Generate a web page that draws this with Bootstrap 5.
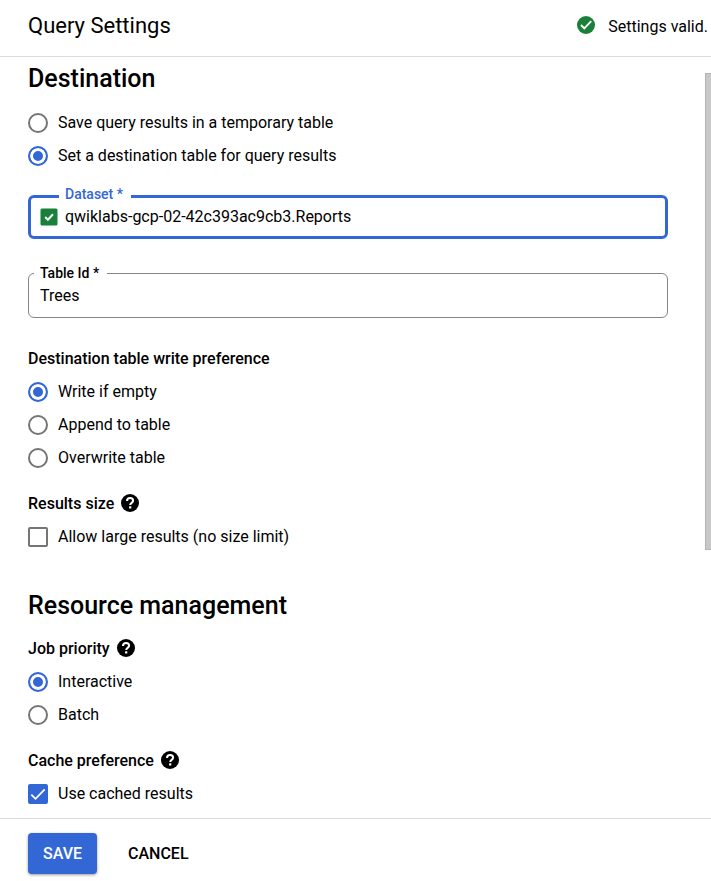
<!DOCTYPE html>
<html lang="en">
<head>
<meta charset="utf-8">
<meta name="viewport" content="width=device-width, initial-scale=1">
<title>Query Settings</title>
<link href="https://cdn.jsdelivr.net/npm/bootstrap@5.3.0/dist/css/bootstrap.min.css" rel="stylesheet">
<style>
  :root { --accent: #3367d6; --ok: #188038; --line: #dadce0; }
  body { font-family: Roboto, "Liberation Sans", sans-serif; font-size: 16px; line-height: 24px; color: #000; }
  .panel-head { padding: 11px 3px 15px 28px; border-bottom: 1px solid var(--line); min-height: 57px; }
  .panel-title { font-size: 22px; line-height: 30px; font-weight: 400; }
  .panel-body { padding: 6px 37px 8px 28px; }
  .panel-foot { padding: 14px 28px 7px; border-top: 1px solid var(--line); }
  .section-title { font-size: 25px; line-height: 32px; font-weight: 500; margin: 0 0 11px; }
  .section-title.later { margin-top: 37px; margin-bottom: 15px; }
  .group-title { font-size: 16px; line-height: 24px; font-weight: 500; margin: 0 0 4px; }
  .group-title.first { margin-top: 29px; }
  .group-gap { margin-top: 18px; }
  .option { min-height: 33px; gap: 10px; }
  .option .form-check-input { width: 20px; height: 20px; margin: 0; border: 2px solid #757575; flex: none; box-shadow: none; }
  .option .form-check-input[type=checkbox] { border-radius: 2px; }
  .option .form-check-input:checked { border-color: var(--accent); background-color: var(--accent); }
  .option .form-check-input[type=radio]:checked { background-image: none; box-shadow: inset 0 0 0 3px #fff; }
  .option .form-check-input[type=checkbox]:checked { background-origin: border-box; background-size: 20px 20px; background-image: url("data:image/svg+xml,%3Csvg xmlns='http://www.w3.org/2000/svg' viewBox='0 0 20 20'%3E%3Cpath d='M3.3 10.6l4.2 4.2L16.7 5.4' fill='none' stroke='white' stroke-width='1.8'/%3E%3C/svg%3E"); }
  .outlined { border: 1px solid #80868b; border-radius: 6px; height: 45px; padding: 0 11px; }
  .outlined.active { border: 3px solid var(--accent); height: 44px; padding: 0 9px; margin-top: 23px; margin-bottom: 34px; gap: 7px; }
  .outlined label { position: absolute; top: -11px; left: 5px; padding: 0 8px 0 6px; background: #fff; font-size: 14px; line-height: 20px; font-weight: 500; }
  .outlined.active label { top: -14px; left: 28px; color: var(--accent); }
  .outlined input { font-size: 16px; line-height: 24px; color: #000; outline: 0; min-width: 0; }
  .help { width: 20px; height: 20px; margin: 1px 0 0 6px; }
  .save { background: var(--accent); color: #fff; border-radius: 4px; box-shadow: 0 1px 3px rgba(0,0,0,.4); }
  .action { font-size: 16px; font-weight: 500; line-height: 25px; padding: 8px 15px; border: 0; }
  .rail { width: 6px; padding-top: 16px; }
  .thumb { height: 64%; background: #c8c8c8; border: 1px solid #b4b4b4; border-right: 0; }
</style>
<script src="https://cdn.jsdelivr.net/npm/bootstrap@5.3.0/dist/js/bootstrap.bundle.min.js" defer></script>
</head>
<body class="d-flex flex-column min-vh-100 bg-white">
<svg class="d-none" aria-hidden="true">
  <symbol id="help-icon" viewBox="0 0 20 20">
    <circle cx="10" cy="10" r="9" fill="#000"/>
    <path d="M7 8.1C7 6.1 8.3 5 10.1 5s3 1.100 3 2.700c0 2.100-2.900 2.200-2.900 4.200" fill="none" stroke="#fff" stroke-width="2"/>
    <rect x="9.100" y="13.300" width="2.200" height="2.200" fill="#fff"/>
  </symbol>
</svg>

<header class="panel-head d-flex align-items-start justify-content-between">
  <h1 class="panel-title m-0">Query Settings</h1>
  <div class="d-flex align-items-start pt-1" role="status">
    <svg class="me-2" width="20" height="20" viewBox="0 0 20 20" aria-hidden="true"><circle cx="10" cy="10" r="9" fill="#188038"/><path d="M5 10l3.300 3.300L15.200 6.200" fill="none" stroke="#fff" stroke-width="1.900"/></svg>
    <span class="ps-1">Settings valid.</span>
  </div>
</header>

<div class="d-flex flex-grow-1">
  <main class="panel-body flex-grow-1">
    <section>
      <h2 class="section-title" id="dest">Destination</h2>
      <div role="radiogroup" aria-labelledby="dest">
        <div class="option d-flex align-items-center"><input class="form-check-input" type="radio" name="dest" id="d1"><label for="d1">Save query results in a temporary table</label></div>
        <div class="option d-flex align-items-center"><input class="form-check-input" type="radio" name="dest" id="d2" checked><label for="d2">Set a destination table for query results</label></div>
      </div>
      <div class="outlined active position-relative d-flex align-items-center">
        <label for="dataset">Dataset *</label>
        <svg class="flex-shrink-0" width="18" height="18" viewBox="0 0 18 18" aria-hidden="true"><rect x="0.500" y="0.500" width="17" height="17" rx="1.500" fill="#188038"/><path d="M5.200 9l2.700 2.700L13 6.300" fill="none" stroke="#fff" stroke-width="2"/></svg>
        <input class="border-0 p-0 bg-transparent flex-grow-1" id="dataset" type="text" value="qwiklabs-gcp-02-42c393ac9cb3.Reports">
      </div>
      <div class="outlined position-relative d-flex align-items-center">
        <label for="table-id">Table Id *</label>
        <input class="border-0 p-0 bg-transparent flex-grow-1" id="table-id" type="text" value="Trees">
      </div>
      <h3 class="group-title first" id="write">Destination table write preference</h3>
      <div role="radiogroup" aria-labelledby="write">
        <div class="option d-flex align-items-center"><input class="form-check-input" type="radio" name="write" id="w1" checked><label for="w1">Write if empty</label></div>
        <div class="option d-flex align-items-center"><input class="form-check-input" type="radio" name="write" id="w2"><label for="w2">Append to table</label></div>
        <div class="option d-flex align-items-center"><input class="form-check-input" type="radio" name="write" id="w3"><label for="w3">Overwrite table</label></div>
      </div>
      <div class="group-gap d-flex align-items-start">
        <h3 class="group-title">Results size</h3>
        <button class="help btn p-0 border-0 d-flex" type="button" aria-label="About results size"><svg width="20" height="20"><use href="#help-icon"/></svg></button>
      </div>
      <div class="option d-flex align-items-center"><input class="form-check-input" type="checkbox" id="large"><label for="large">Allow large results (no size limit)</label></div>
    </section>

    <section>
      <h2 class="section-title later">Resource management</h2>
      <div class="d-flex align-items-start">
        <h3 class="group-title" id="job">Job priority</h3>
        <button class="help btn p-0 border-0 d-flex" type="button" aria-label="About job priority"><svg width="20" height="20"><use href="#help-icon"/></svg></button>
      </div>
      <div role="radiogroup" aria-labelledby="job">
        <div class="option d-flex align-items-center"><input class="form-check-input" type="radio" name="job" id="j1" checked><label for="j1">Interactive</label></div>
        <div class="option d-flex align-items-center"><input class="form-check-input" type="radio" name="job" id="j2"><label for="j2">Batch</label></div>
      </div>
      <div class="group-gap d-flex align-items-start">
        <h3 class="group-title">Cache preference</h3>
        <button class="help btn p-0 border-0 d-flex" type="button" aria-label="About cache preference"><svg width="20" height="20"><use href="#help-icon"/></svg></button>
      </div>
      <div class="option d-flex align-items-center"><input class="form-check-input" type="checkbox" id="cache" checked><label for="cache">Use cached results</label></div>
    </section>
  </main>
  <div class="rail" aria-hidden="true"><div class="thumb"></div></div>
</div>

<footer class="panel-foot d-flex gap-3">
  <button class="save action" type="button">SAVE</button>
  <button class="action bg-transparent text-black" type="button">CANCEL</button>
</footer>
</body>
</html>
